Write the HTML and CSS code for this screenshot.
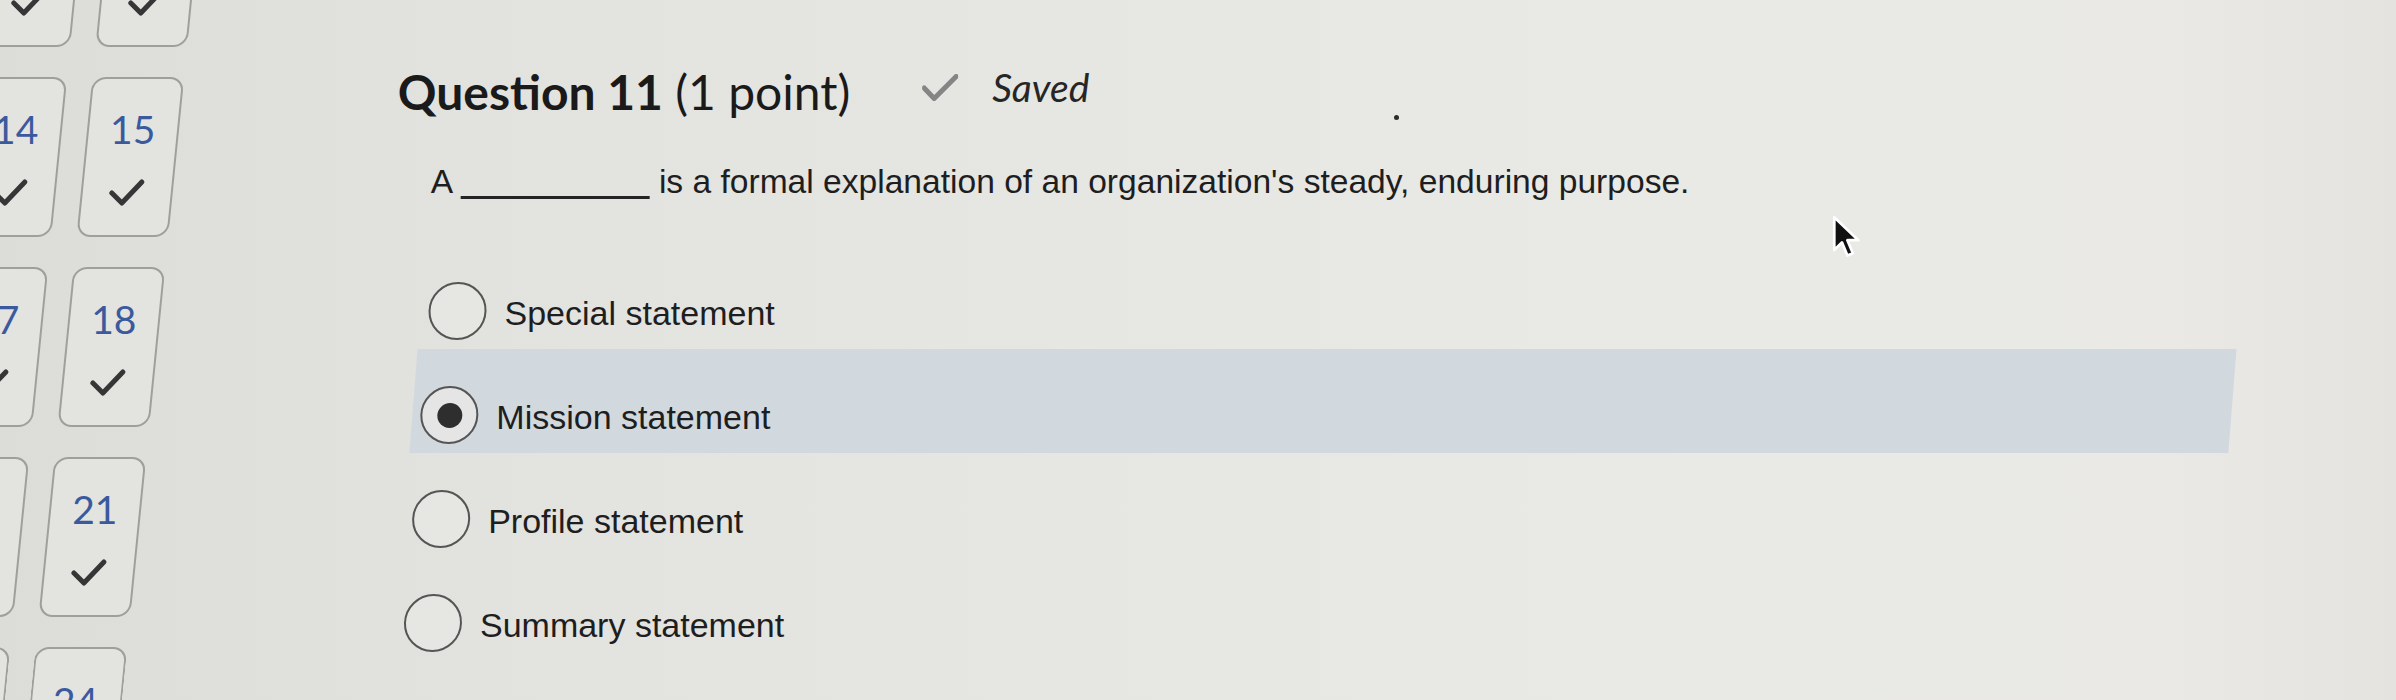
FILE: index.html
```html
<!DOCTYPE html>
<html lang="en">
<head>
<meta charset="utf-8">
<title>Question 11</title>
<link rel="stylesheet" href="styles.css">
</head>
<body>
<div class="screen">
  <aside class="nav">
    <div class="tiles">
      <div class="tile"></div>
      <div class="tile"><span class="tile-num"></span><svg class="tile-check" viewBox="0 0 36 28"><path d="M3 15 L13 25 L33 4"/></svg></div>
      <div class="tile"><span class="tile-num"></span><svg class="tile-check" viewBox="0 0 36 28"><path d="M3 15 L13 25 L33 4"/></svg></div>
      <div class="tile"></div>
      <div class="tile"><span class="tile-num">14</span><svg class="tile-check" viewBox="0 0 36 28"><path d="M3 15 L13 25 L33 4"/></svg></div>
      <div class="tile"><span class="tile-num">15</span><svg class="tile-check" viewBox="0 0 36 28"><path d="M3 15 L13 25 L33 4"/></svg></div>
      <div class="tile"></div>
      <div class="tile"><span class="tile-num">17</span><svg class="tile-check" viewBox="0 0 36 28"><path d="M3 15 L13 25 L33 4"/></svg></div>
      <div class="tile"><span class="tile-num">18</span><svg class="tile-check" viewBox="0 0 36 28"><path d="M3 15 L13 25 L33 4"/></svg></div>
      <div class="tile"></div>
      <div class="tile"><span class="tile-num">20</span><svg class="tile-check" viewBox="0 0 36 28"><path d="M3 15 L13 25 L33 4"/></svg></div>
      <div class="tile"><span class="tile-num">21</span><svg class="tile-check" viewBox="0 0 36 28"><path d="M3 15 L13 25 L33 4"/></svg></div>
      <div class="tile tile-last"></div>
      <div class="tile tile-last"></div>
      <div class="tile tile-last"><span class="tile-num">24</span></div>
    </div>
  </aside>

  <main class="quiz">
    <div class="q-head">
      <h2 class="q-title"><span class="q-num">Question 11</span> <span class="q-pts">(1 point)</span></h2>
      <div class="saved">
        <svg class="saved-check" viewBox="0 0 36 27"><path d="M2 14 L12 24.5 L34 2.5"/></svg>
        <span class="saved-text">Saved</span>
      </div>
    </div>

    <p class="q-text">A <span class="blank"></span> is a formal explanation of an organization's steady, enduring purpose.</p>

    <div class="options">
      <label class="opt"><span class="radio"></span><span class="opt-label">Special statement</span></label>
      <label class="opt selected"><span class="radio"></span><span class="opt-label">Mission statement</span></label>
      <label class="opt"><span class="radio"></span><span class="opt-label">Profile statement</span></label>
      <label class="opt"><span class="radio"></span><span class="opt-label">Summary statement</span></label>
    </div>
  </main>

  <span class="speck"></span>
  <svg class="cursor" viewBox="0 0 30 42"><path d="M2 2 L2 32 L9 25 L14 37 L19 35 L14 23 L24 23 Z"/></svg>
</div>
</body>
</html>
```

FILE: styles.css
```css
html, body {
  margin: 0;
  padding: 0;
}

body {
  width: 2396px;
  height: 700px;
  overflow: hidden;
  background: linear-gradient(90deg, #dcdcd9 0%, #e2e2df 20%, #e6e6e3 45%, #e9e9e6 70%, #eae9e6 90%, #e4e3e0 100%);
  font-family: "Liberation Sans", Arial, sans-serif;
  color: #1e1e1e;
}

.screen {
  position: relative;
  display: flex;
  width: 2396px;
  height: 700px;
  overflow: hidden;
}

/* ---------- question navigation tiles ---------- */
.nav {
  width: 192px;
  height: 700px;
  flex-shrink: 0;
  transform: skewX(-5.7deg);
  transform-origin: 0 0;
}

.tiles {
  display: grid;
  grid-template-columns: repeat(3, 92px);
  grid-template-rows: repeat(4, 160px) 66px;
  column-gap: 25px;
  row-gap: 30px;
  margin-left: -134px;
  margin-top: -113px;
}

.tile {
  box-sizing: border-box;
  border: 2px solid #9f9f9d;
  border-radius: 14px;
  background: #e3e3e0;
  display: flex;
  flex-direction: column;
  align-items: center;
  padding-top: 30px;
  overflow: hidden;
}

.tile-last {
  border-bottom: none;
  border-radius: 14px 14px 0 0;
  padding-top: 32px;
}

.tile-num {
  display: block;
  height: 40px;
  font-family: Lato, "Liberation Sans", sans-serif;
  font-size: 39px;
  line-height: 40px;
  color: #3b5a9e;
  transform: skewX(5.7deg);
}

.tile-check {
  width: 36px;
  height: 28px;
  margin-top: 29px;
  fill: none;
  stroke: #363636;
  stroke-width: 5;
  stroke-linecap: round;
  stroke-linejoin: round;
  transform: skewX(5.7deg);
}

/* ---------- quiz question ---------- */
.quiz {
  flex: 1;
  padding-left: 213px;
  transform: skewX(-4.5deg);
  transform-origin: 0 0;
}

.q-head {
  display: flex;
  align-items: flex-start;
  margin-top: 64px;
  height: 56px;
}

.q-title {
  margin: 0;
  font-family: Lato, "Liberation Sans", sans-serif;
  font-size: 48px;
  line-height: 56px;
  font-weight: 400;
  color: #1a1a1a;
  white-space: nowrap;
  transform: skewX(4.5deg);
}

.q-num {
  font-weight: 700;
}

.saved {
  display: flex;
  align-items: center;
  gap: 34px;
  height: 46px;
  margin-left: 71px;
  transform: skewX(4.5deg);
}

.saved-check {
  width: 36px;
  height: 27px;
  fill: none;
  stroke: #858585;
  stroke-width: 5;
  stroke-linecap: round;
  stroke-linejoin: round;
}

.saved-text {
  font-family: Lato, "Liberation Sans", sans-serif;
  font-style: italic;
  font-size: 39px;
  line-height: 46px;
  color: #262626;
}

.q-text {
  display: inline-block;
  margin: 42px 0 0 40px;
  font-size: 33.6px;
  line-height: 40px;
  white-space: nowrap;
  transform: skewX(4.5deg);
}

.blank {
  display: inline-block;
  width: 189px;
  height: 0;
  border-bottom: 3px solid #242424;
  margin-bottom: -6px;
}

.options {
  margin: 43px 0 0 40px;
  width: 1819px;
}

.opt {
  display: flex;
  align-items: center;
  gap: 18px;
  box-sizing: border-box;
  height: 104px;
  padding: 37px 0 9px 8px;
}

.opt.selected {
  background: #d1d9de;
}

.radio {
  box-sizing: border-box;
  width: 58px;
  height: 58px;
  flex-shrink: 0;
  border-radius: 50%;
  border: 2.5px solid #555555;
  background: #e6e6e3;
  display: flex;
  align-items: center;
  justify-content: center;
  transform: skewX(3deg);
}

.selected .radio {
  background: #e4e5e4;
}

.selected .radio::after {
  content: "";
  width: 25px;
  height: 25px;
  border-radius: 50%;
  background: #2e2e2e;
}

.opt-label {
  font-size: 34px;
  line-height: 40px;
  padding-top: 4px;
  white-space: nowrap;
  transform: skewX(4.5deg);
}

/* ---------- overlays ---------- */
.cursor {
  position: absolute;
  left: 1832px;
  top: 215px;
  width: 33px;
  height: 46px;
  fill: #111111;
  stroke: #ffffff;
  stroke-width: 2.5;
  stroke-linejoin: round;
}

.speck {
  position: absolute;
  left: 1394px;
  top: 115px;
  width: 5px;
  height: 5px;
  border-radius: 50%;
  background: #2c2c2c;
}
```
